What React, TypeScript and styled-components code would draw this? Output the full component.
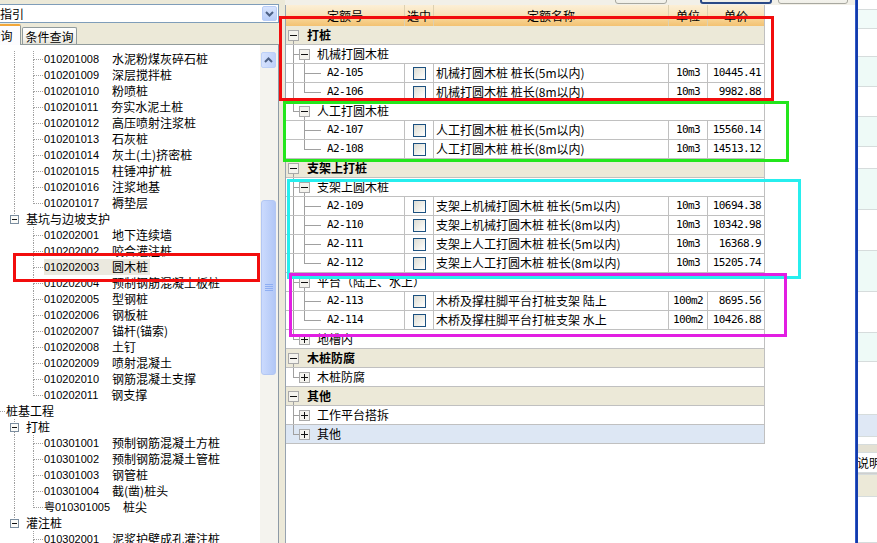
import React from "react";
import styled, { createGlobalStyle } from "styled-components";

const CJK = `"Noto Sans CJK SC", "Liberation Sans", sans-serif`;
const LATIN = `"Liberation Sans", "Noto Sans CJK SC", sans-serif`;
const MONO = `"DejaVu Sans Mono", "Liberation Mono", monospace`;

const GlobalStyle = createGlobalStyle`
  html, body { margin: 0; padding: 0; background: #ece9d8; }
  body { font-family: ${CJK}; font-size: 12px; color: #000; }
  * { box-sizing: border-box; }
`;

type SlotSpec = { up?: boolean; down?: boolean; right?: boolean; box?: "minus" | "plus" };

const PASS: SlotSpec = { up: true, down: true };
const TEE: SlotSpec = { up: true, down: true, right: true };
const ELBOW: SlotSpec = { up: true, right: true };
const NONE: SlotSpec = {};

const SlotSvg = styled.svg`
  display: block;
  flex: none;
`;

// tree connector drawing (dotted for the left tree, solid for the grid)
function Slot({ w, h, cx, spec, dotted, boxSize = 11 }: { w: number; h: number; cx: number; spec: SlotSpec; dotted?: boolean; boxSize?: number }) {
  const cy = Math.floor(h / 2) + 0.5;
  const half = (boxSize - 1) / 2;
  const box = spec.box;
  const stroke = "#a0a0a0";
  const dash = dotted ? "1 1" : undefined;
  const yTop = box ? cy - half : cy;
  const yBottom = box ? cy + half : cy;
  const xRight = box ? cx + half : cx;
  return (
    <SlotSvg width={w} height={h} shapeRendering="crispEdges">
      {spec.up && <line x1={cx} y1={0} x2={cx} y2={yTop} stroke={stroke} strokeDasharray={dash} />}
      {spec.down && <line x1={cx} y1={yBottom} x2={cx} y2={h} stroke={stroke} strokeDasharray={dash} />}
      {spec.right && <line x1={xRight} y1={cy} x2={w} y2={cy} stroke={stroke} strokeDasharray={dash} />}
      {box && (
        <rect
          x={cx - half}
          y={cy - half}
          width={boxSize - 1}
          height={boxSize - 1}
          fill={dotted ? "#fbfbf8" : "#f4f3ee"}
          stroke={dotted ? "#7b8d9f" : "#a9a9a9"}
        />
      )}
      {box && <line x1={cx - half + 1.5} y1={cy} x2={cx + half - 1.5} y2={cy} stroke="#111" />}
      {box === "plus" && <line x1={cx} y1={cy - half + 1.5} x2={cx} y2={cy + half - 1.5} stroke="#111" />}
    </SlotSvg>
  );
}

function Chevron({ up }: { up?: boolean }) {
  return (
    <svg width="9" height="6" viewBox="0 0 9 6">
      <polyline
        points={up ? "1,5 4.5,1.5 8,5" : "1,1 4.5,4.5 8,1"}
        fill="none"
        stroke="#4d6185"
        strokeWidth="2"
      />
    </svg>
  );
}

type TreeItem = { slots: SlotSpec[]; code?: string; name: string; selected?: boolean };

const leaf = (code: string, name: string, outer: SlotSpec, last = false, selected = false): TreeItem => ({
  slots: [PASS, outer, last ? ELBOW : TEE],
  code,
  name,
  selected,
});

const treeItems: TreeItem[] = [
  leaf("010201008", "水泥粉煤灰碎石桩", PASS),
  leaf("010201009", "深层搅拌桩", PASS),
  leaf("010201010", "粉喷桩", PASS),
  leaf("010201011", "夯实水泥土桩", PASS),
  leaf("010201012", "高压喷射注浆桩", PASS),
  leaf("010201013", "石灰桩", PASS),
  leaf("010201014", "灰土(土)挤密桩", PASS),
  leaf("010201015", "柱锤冲扩桩", PASS),
  leaf("010201016", "注浆地基", PASS),
  leaf("010201017", "褥垫层", PASS, true),
  { slots: [PASS, { up: true, box: "minus" }], name: "基坑与边坡支护" },
  leaf("010202001", "地下连续墙", NONE),
  leaf("010202002", "咬合灌注桩", NONE),
  leaf("010202003", "圆木桩", NONE, false, true),
  leaf("010202004", "预制钢筋混凝土板桩", NONE),
  leaf("010202005", "型钢桩", NONE),
  leaf("010202006", "钢板桩", NONE),
  leaf("010202007", "锚杆(锚索)", NONE),
  leaf("010202008", "土钉", NONE),
  leaf("010202009", "喷射混凝土", NONE),
  leaf("010202010", "钢筋混凝土支撑", NONE),
  leaf("010202011", "钢支撑", NONE, true),
  { slots: [TEE], name: "桩基工程" },
  { slots: [PASS, { up: true, down: true, box: "minus" }], name: "打桩" },
  leaf("010301001", "预制钢筋混凝土方桩", PASS),
  leaf("010301002", "预制钢筋混凝土管桩", PASS),
  leaf("010301003", "钢管桩", PASS),
  leaf("010301004", "截(凿)桩头", PASS),
  leaf("粤010301005", "桩尖", PASS, true),
  { slots: [PASS, { up: true, box: "minus" }], name: "灌注桩" },
  leaf("010302001", "泥浆护壁成孔灌注桩", NONE),
];

type GridRow =
  | { kind: "group"; label: string }
  | { kind: "sub"; label: string; last: boolean; open: boolean; selected?: boolean }
  | { kind: "item"; code: string; name: string; unit: string; price: string; parentLast: boolean; last: boolean };

const item = (code: string, name: string, unit: string, price: string, parentLast: boolean, last = false): GridRow => ({
  kind: "item",
  code,
  name,
  unit,
  price,
  parentLast,
  last,
});

const gridRows: GridRow[] = [
  { kind: "group", label: "打桩" },
  { kind: "sub", label: "机械打圆木桩", last: false, open: true },
  item("A2-105", "机械打圆木桩 桩长(5m以内)", "10m3", "10445.41", false),
  item("A2-106", "机械打圆木桩 桩长(8m以内)", "10m3", "9982.88", false, true),
  { kind: "sub", label: "人工打圆木桩", last: true, open: true },
  item("A2-107", "人工打圆木桩 桩长(5m以内)", "10m3", "15560.14", true),
  item("A2-108", "人工打圆木桩 桩长(8m以内)", "10m3", "14513.12", true, true),
  { kind: "group", label: "支架上打桩" },
  { kind: "sub", label: "支架上圆木桩", last: false, open: true },
  item("A2-109", "支架上机械打圆木桩 桩长(5m以内)", "10m3", "10694.38", false),
  item("A2-110", "支架上机械打圆木桩 桩长(8m以内)", "10m3", "10342.98", false),
  item("A2-111", "支架上人工打圆木桩 桩长(5m以内)", "10m3", "16368.9", false),
  item("A2-112", "支架上人工打圆木桩 桩长(8m以内)", "10m3", "15205.74", false, true),
  { kind: "sub", label: "平台（陆上、水上）", last: false, open: true },
  item("A2-113", "木桥及撑柱脚平台打桩支架 陆上", "100m2", "8695.56", false),
  item("A2-114", "木桥及撑柱脚平台打桩支架 水上", "100m2", "10426.88", false, true),
  { kind: "sub", label: "地槽内", last: true, open: false },
  { kind: "group", label: "木桩防腐" },
  { kind: "sub", label: "木桩防腐", last: true, open: false },
  { kind: "group", label: "其他" },
  { kind: "sub", label: "工作平台搭拆", last: false, open: false },
  { kind: "sub", label: "其他", last: true, open: false, selected: true },
];

const columns = [
  { title: "定额号", w: 119 },
  { title: "选中", w: 29 },
  { title: "定额名称", w: 235 },
  { title: "单位", w: 39 },
  { title: "单价", w: 56 },
];

const sideRows = [
  { h: 10, bg: "#ffffff" },
  { h: 19, bg: "#f1fbf9" },
  { h: 28, bg: "#ffffff" },
  { h: 30, bg: "#eefaf7" },
  { h: 30, bg: "#ffffff" },
  { h: 30, bg: "#eefaf7" },
  { h: 22, bg: "#ffffff" },
  { h: 41, bg: "#eefaf7" },
  { h: 41, bg: "#ffffff" },
  { h: 41, bg: "#eefaf7" },
  { h: 41, bg: "#ffffff" },
  { h: 29, bg: "#eefaf7" },
  { h: 53, bg: "#ffffff" },
  { h: 22, bg: "#dfe8f5" },
  { h: 8, bg: "#ffffff" },
  { h: 8, bg: "#e4e1d3" },
  { h: 20, bg: "#ffffff", text: "说明" },
  { h: 2, bg: "#cfcfcf" },
  { h: 22, bg: "#ece9d8" },
  { h: 46, bg: "#ffffff" },
];

const marks = [
  { c: "#f20d0d", x: 279, y: 16, w: 495, h: 85 },
  { c: "#23e61c", x: 283, y: 101, w: 506, h: 61 },
  { c: "#27eeee", x: 287, y: 179, w: 514, h: 100 },
  { c: "#e21ee2", x: 289, y: 273, w: 498, h: 64 },
  { c: "#f20d0d", x: 13, y: 253, w: 247, h: 29 },
];

const treeGap = [1, 2, 1];

function App() {
  return (
    <>
      <GlobalStyle />
      <Screen>
        <LeftPane>
          <Combo>
            <ComboText>指引</ComboText>
            <ComboButton>
              <Chevron />
            </ComboButton>
          </Combo>
          <TabStrip>
            <Tab $active $w={41} $shift={-20}>
              查询
            </Tab>
            <Tab $w={55} $shift={1}>
              条件查询
            </Tab>
          </TabStrip>
          <TreePanel>
            <TreeBody>
              <TreeList>
                {treeItems.map((t, i) => (
                  <TreeRow key={i}>
                    {t.slots.map((s, j) => (
                      <Slot key={j} w={19} h={16} cx={9.5} spec={s} dotted boxSize={9} />
                    ))}
                    <TreeLabel $selected={t.selected} $gap={treeGap[t.slots.length - 1]}>
                      {t.code && <TreeCode>{t.code}</TreeCode>}
                      <span>{t.name}</span>
                    </TreeLabel>
                  </TreeRow>
                ))}
              </TreeList>
            </TreeBody>
            <ScrollBar>
              <ScrollButton>
                <Chevron up />
              </ScrollButton>
              <Thumb $top={132} $h={175}>
                <svg width="8" height="8">
                  {[0, 2, 4, 6].map((y) => (
                    <line key={y} x1="0" y1={y + 0.5} x2="8" y2={y + 0.5} stroke="#8eaef2" />
                  ))}
                </svg>
              </Thumb>
            </ScrollBar>
          </TreePanel>
        </LeftPane>
        <Splitter />
        <GridPane>
          <Toolbar>
            <ToolButton $w={52} $gap={0} />
            <ToolButton $w={72} $gap={33} $focus />
            <ToolButton $w={70} $gap={6} />
          </Toolbar>
          <GridBody>
            <Table>
              <HeaderRow>
                {columns.map((c, i) => (
                  <HeaderCell key={c.title} $w={c.w} $last={i === columns.length - 1}>
                    {c.title}
                  </HeaderCell>
                ))}
              </HeaderRow>
              {gridRows.map((r, i) => {
                if (r.kind === "group") {
                  return (
                    <FullRow key={i} $bg="#ece9d8">
                      <Slot w={11} h={18} cx={5.5} spec={{ box: "minus", down: true }} />
                      <GroupLabel>{r.label}</GroupLabel>
                    </FullRow>
                  );
                }
                if (r.kind === "sub") {
                  return (
                    <FullRow key={i} $bg={r.selected ? "#dde7f4" : "#ffffff"}>
                      <Slot w={11} h={18} cx={5.5} spec={r.last ? ELBOW : TEE} />
                      <Slot w={11} h={18} cx={5.5} spec={{ box: r.open ? "minus" : "plus", down: r.open }} />
                      <SubLabel>{r.label}</SubLabel>
                    </FullRow>
                  );
                }
                return (
                  <DataRow key={i}>
                    <Cell $w={columns[0].w} $align="flex-start" $pad="0 0 0 2px">
                      <Slot w={11} h={18} cx={5.5} spec={r.parentLast ? NONE : PASS} />
                      <Slot w={22} h={18} cx={5.5} spec={r.last ? ELBOW : TEE} />
                      <Mono $ml={6}>{r.code}</Mono>
                    </Cell>
                    <Cell $w={columns[1].w} $align="center">
                      <Check />
                    </Cell>
                    <Cell $w={columns[2].w} $align="flex-start" $pad="0 0 0 2px">
                      {r.name}
                    </Cell>
                    <Cell $w={columns[3].w} $align="center">
                      <Mono>{r.unit}</Mono>
                    </Cell>
                    <Cell $w={columns[4].w} $align="flex-end" $pad="0 3px 0 0" $last>
                      <Mono>{r.price}</Mono>
                    </Cell>
                  </DataRow>
                );
              })}
            </Table>
          </GridBody>
        </GridPane>
        <BlueBar />
        <SideStrip>
          {sideRows.map((s, i) => (
            <SideRow key={i} $h={s.h} $bg={s.bg}>
              {s.text}
            </SideRow>
          ))}
        </SideStrip>
        {marks.map((m, i) => (
          <Mark key={i} $c={m.c} $x={m.x} $y={m.y} $w={m.w} $h={m.h} />
        ))}
      </Screen>
    </>
  );
}

export default App;

const Screen = styled.div`
  position: relative;
  display: flex;
  width: 877px;
  height: 543px;
  overflow: hidden;
  background: #ece9d8;
`;

const LeftPane = styled.div`
  flex: none;
  width: 279px;
  display: flex;
  flex-direction: column;
  padding-top: 4px;
  overflow: hidden;
`;

const Combo = styled.div`
  flex: none;
  height: 19px;
  margin-bottom: 1px;
  display: flex;
  align-items: center;
  justify-content: space-between;
  background: #fff;
  border: 1px solid #7f9db9;
  border-left: none;
  padding-right: 1px;
`;

const ComboText = styled.span`
  font-size: 12px;
  line-height: 17px;
  padding-left: 0;
`;

const ComboButton = styled.div`
  width: 15px;
  height: 15px;
  display: flex;
  align-items: center;
  justify-content: center;
  border: 1px solid #b9cdf7;
  border-radius: 2px;
  background: linear-gradient(#d8e4fd, #b8cdf9);
`;

const TabStrip = styled.div`
  flex: none;
  height: 20px;
  display: flex;
  align-items: flex-end;
`;

const Tab = styled.div<{ $active?: boolean; $w: number; $shift: number }>`
  position: relative;
  z-index: 1;
  flex: none;
  width: ${(p) => p.$w}px;
  height: ${(p) => (p.$active ? 21 : 17)}px;
  margin-left: ${(p) => p.$shift}px;
  margin-bottom: ${(p) => (p.$active ? -1 : 0)}px;
  display: flex;
  align-items: center;
  justify-content: center;
  font-size: 12px;
  line-height: 14px;
  border: 1px solid #919b9c;
  border-bottom: none;
  border-top: ${(p) => (p.$active ? "2px solid #f2a73a" : "1px solid #919b9c")};
  border-radius: 2px 2px 0 0;
  background: ${(p) => (p.$active ? "#fcfcfe" : "linear-gradient(#ffffff, #f3f2ec 70%, #e4e2d8)")};
  padding-top: ${(p) => (p.$active ? 0 : 1)}px;
`;

const TreePanel = styled.div`
  flex: 1;
  min-height: 0;
  display: flex;
  background: #fff;
  border-top: 1px solid #919b9c;
  border-right: 1px solid #8e9aa6;
`;

const TreeBody = styled.div`
  flex: 1;
  min-width: 0;
  overflow: hidden;
  padding-top: 6px;
`;

const TreeList = styled.div`
  margin-left: -14px;
  display: flex;
  flex-direction: column;
`;

const TreeRow = styled.div`
  display: flex;
  align-items: center;
  height: 16px;
  white-space: nowrap;
`;

const TreeLabel = styled.div<{ $selected?: boolean; $gap: number }>`
  display: flex;
  align-items: center;
  height: 16px;
  margin-left: ${(p) => p.$gap}px;
  padding-right: 2px;
  font-size: 12px;
  line-height: 16px;
  background: ${(p) => (p.$selected ? "#ebe9df" : "transparent")};
`;

const TreeCode = styled.span`
  font-family: ${LATIN};
  font-size: 11px;
  margin-right: 13px;
`;

const ScrollBar = styled.div`
  flex: none;
  width: 18px;
  display: flex;
  flex-direction: column;
  padding: 7px 2px 0 1px;
  background: #f4f3ee;
`;

const ScrollButton = styled.div`
  flex: none;
  height: 16px;
  display: flex;
  align-items: center;
  justify-content: center;
  border: 1px solid #bdd0f7;
  border-radius: 2px;
  background: linear-gradient(to right, #d6e2fd, #bfd1fa);
`;

const Thumb = styled.div<{ $top: number; $h: number }>`
  flex: none;
  margin-top: ${(p) => p.$top}px;
  height: ${(p) => p.$h}px;
  display: flex;
  align-items: center;
  justify-content: center;
  border: 1px solid #b3c7f3;
  border-radius: 3px;
  background: linear-gradient(to right, #cbdafd, #bccff9 60%, #b2c7f6);
`;

const Splitter = styled.div`
  flex: none;
  width: 6px;
`;

const GridPane = styled.div`
  flex: none;
  width: 570px;
  display: flex;
  flex-direction: column;
`;

const Toolbar = styled.div`
  flex: none;
  height: 5px;
  display: flex;
  align-items: flex-end;
  padding-left: 330px;
  overflow: hidden;
  background: #f2f0e8;
`;

const ToolButton = styled.div<{ $w: number; $gap: number; $focus?: boolean }>`
  flex: none;
  width: ${(p) => p.$w}px;
  height: 18px;
  margin-left: ${(p) => p.$gap}px;
  margin-bottom: 1px;
  border: ${(p) => (p.$focus ? "2px solid #2c4a86" : "1px solid #a8a8a0")};
  border-radius: 3px;
  background: linear-gradient(#ffffff, #f0efe8);
`;

const GridBody = styled.div`
  flex: 1;
  min-height: 0;
  overflow: hidden;
  background: #fff;
  border-left: 1px solid #97a3b0;
`;

const Table = styled.div`
  width: 479px;
  display: flex;
  flex-direction: column;
  border-right: 1px solid #c0c0c0;
`;

const HeaderRow = styled.div`
  display: flex;
  flex: none;
  height: 21px;
  background: linear-gradient(#fcefd6 0%, #f9e4bb 45%, #f6cf8a 75%, #f3c272 100%);
`;

const HeaderCell = styled.div<{ $w: number; $last?: boolean }>`
  flex: none;
  width: ${(p) => p.$w}px;
  display: flex;
  align-items: center;
  justify-content: center;
  font-size: 12px;
  line-height: 20px;
  padding-top: 1px;
  border-right: ${(p) => (p.$last ? "none" : "1px solid #ddd0b0")};
`;

const FullRow = styled.div<{ $bg: string }>`
  display: flex;
  flex: none;
  align-items: flex-start;
  height: 19px;
  padding-left: 2px;
  border-bottom: 1px solid #c0c0c0;
  background: ${(p) => p.$bg};
  white-space: nowrap;
`;

const GroupLabel = styled.span`
  margin-left: 8px;
  font-weight: bold;
  font-size: 12px;
  line-height: 18px;
`;

const SubLabel = styled.span`
  margin-left: 7px;
  font-size: 12px;
  line-height: 18px;
`;

const DataRow = styled.div`
  display: flex;
  flex: none;
  height: 19px;
  border-bottom: 1px solid #c0c0c0;
  background: #fff;
`;

const Cell = styled.div<{ $w: number; $align: string; $pad?: string; $last?: boolean }>`
  flex: none;
  width: ${(p) => p.$w}px;
  height: 18px;
  display: flex;
  align-items: center;
  justify-content: ${(p) => p.$align};
  padding: ${(p) => p.$pad ?? "0"};
  border-right: ${(p) => (p.$last ? "none" : "1px solid #c0c0c0")};
  font-size: 12px;
  line-height: 18px;
  white-space: nowrap;
  overflow: hidden;
`;

const Mono = styled.span<{ $ml?: number }>`
  margin-left: ${(p) => p.$ml ?? 0}px;
  font-family: ${MONO};
  font-size: 11px;
  letter-spacing: -0.6px;
  line-height: 18px;
`;

const Check = styled.span`
  width: 13px;
  height: 13px;
  border: 1px solid #1c5180;
  background: linear-gradient(135deg, #dcdcd4 0%, #eeeee8 50%, #ffffff 100%);
`;

const BlueBar = styled.div`
  flex: none;
  width: 3px;
  background: linear-gradient(to right, #3c68d8, #0a2f9e 60%, #1e4bbd);
`;

const SideStrip = styled.div`
  flex: none;
  width: 19px;
  display: flex;
  flex-direction: column;
  overflow: hidden;
`;

const SideRow = styled.div<{ $h: number; $bg: string }>`
  flex: none;
  height: ${(p) => p.$h}px;
  background: ${(p) => p.$bg};
  border-bottom: 1px solid #d6dcdc;
  font-size: 12px;
  line-height: 19px;
  white-space: nowrap;
  text-indent: -1px;
`;

const Mark = styled.div<{ $c: string; $x: number; $y: number; $w: number; $h: number }>`
  position: absolute;
  left: ${(p) => p.$x}px;
  top: ${(p) => p.$y}px;
  width: ${(p) => p.$w}px;
  height: ${(p) => p.$h}px;
  border: 3px solid ${(p) => p.$c};
  pointer-events: none;
`;
